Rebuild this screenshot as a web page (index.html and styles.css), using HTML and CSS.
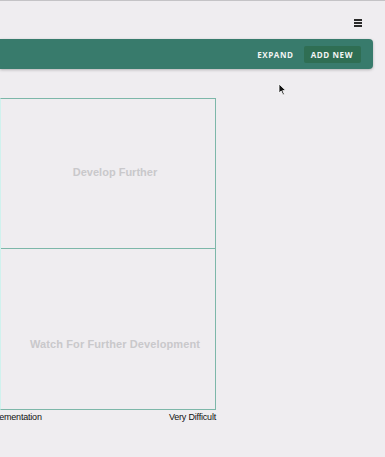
FILE: index.html
```html
<!DOCTYPE html>
<html>
<head>
  <title>Idea Matrix</title>
  <meta charset="UTF-8">
  <link rel="stylesheet" href="styles.css">
</head>
<body>
  <div class="topbar">
    <button class="menu-btn" aria-label="Menu">
      <span></span><span></span><span></span>
    </button>
  </div>

  <div class="toolbar">
    <button class="tool-btn">Expand</button>
    <button class="tool-btn primary">Add New</button>
  </div>

  <div class="matrix">
    <div class="grid">
      <div class="cell top">Develop Further</div>
      <div class="cell bottom">Watch For Further Development</div>
    </div>
    <div class="axis">
      <span>Implementation</span>
      <span>Very Difficult</span>
    </div>
  </div>

  <!-- mouse pointer captured in the screenshot -->
  <svg class="pointer" width="9" height="13" viewBox="0 0 9 13">
    <path d="M1 1 L1 10 L3.2 8 L5 12 L6.4 11.3 L4.7 7.6 L7.8 7.6 Z" fill="#111" stroke="#fff" stroke-width="0.8"/>
  </svg>
</body>
</html>
```

FILE: styles.css
```css
body {
  margin: 0;
  background-color: #efedf0;
  font-family: 'Liberation Sans', Arial, sans-serif;
  border-top: 1px solid #c4c3c6;
  overflow: hidden;
}

.topbar {
  display: flex;
  justify-content: flex-end;
  height: 38px;
  padding-right: 23px;
  box-sizing: border-box;
}

.menu-btn {
  display: flex;
  flex-direction: column;
  gap: 1.5px;
  margin-top: 18px;
  padding: 0;
  border: none;
  background: none;
  width: 8px;
  height: 8px;
}

.menu-btn span {
  display: block;
  width: 8px;
  height: 2px;
  background-color: #2a2a2a;
}

.toolbar {
  display: flex;
  justify-content: flex-end;
  align-items: center;
  gap: 10px;
  height: 30px;
  margin-right: 12px;
  padding-right: 12px;
  background-color: #387b6c;
  border-radius: 0 4px 4px 0;
  box-shadow: 0 1px 3px rgba(0, 0, 0, 0.25);
}

.tool-btn {
  padding: 3px 0;
  border: none;
  background: none;
  color: #f2f4f3;
  font-family: 'Open Sans', sans-serif;
  font-weight: 700;
  font-size: 8px;
  letter-spacing: 0.6px;
  text-transform: uppercase;
  cursor: pointer;
}

.tool-btn.primary {
  padding: 3px 8px 3px 7px;
  background-color: #2f6e53;
  border-radius: 2px;
}

.matrix {
  width: 216px;
  margin-top: 29px;
}

.grid {
  border: 1px solid #7db7a9;
  border-left-color: #d0f2ee;
}

.cell {
  display: flex;
  align-items: center;
  justify-content: center;
  padding-left: 14px;
  color: #c9c8cb;
  font-weight: 700;
  font-size: 11px;
}

.cell.top {
  height: 145px;
  padding-bottom: 4px;
  border-bottom: 1px solid #7db7a9;
}

.cell.bottom {
  height: 130px;
  padding-top: 30px;
  letter-spacing: 0.1px;
}

.axis {
  display: flex;
  justify-content: space-between;
  margin-left: -17px;
  margin-top: 2px;
  font-size: 9px;
  letter-spacing: -0.2px;
  color: #111;
}

.pointer {
  position: absolute;
  left: 278px;
  top: 83px;
}
```
